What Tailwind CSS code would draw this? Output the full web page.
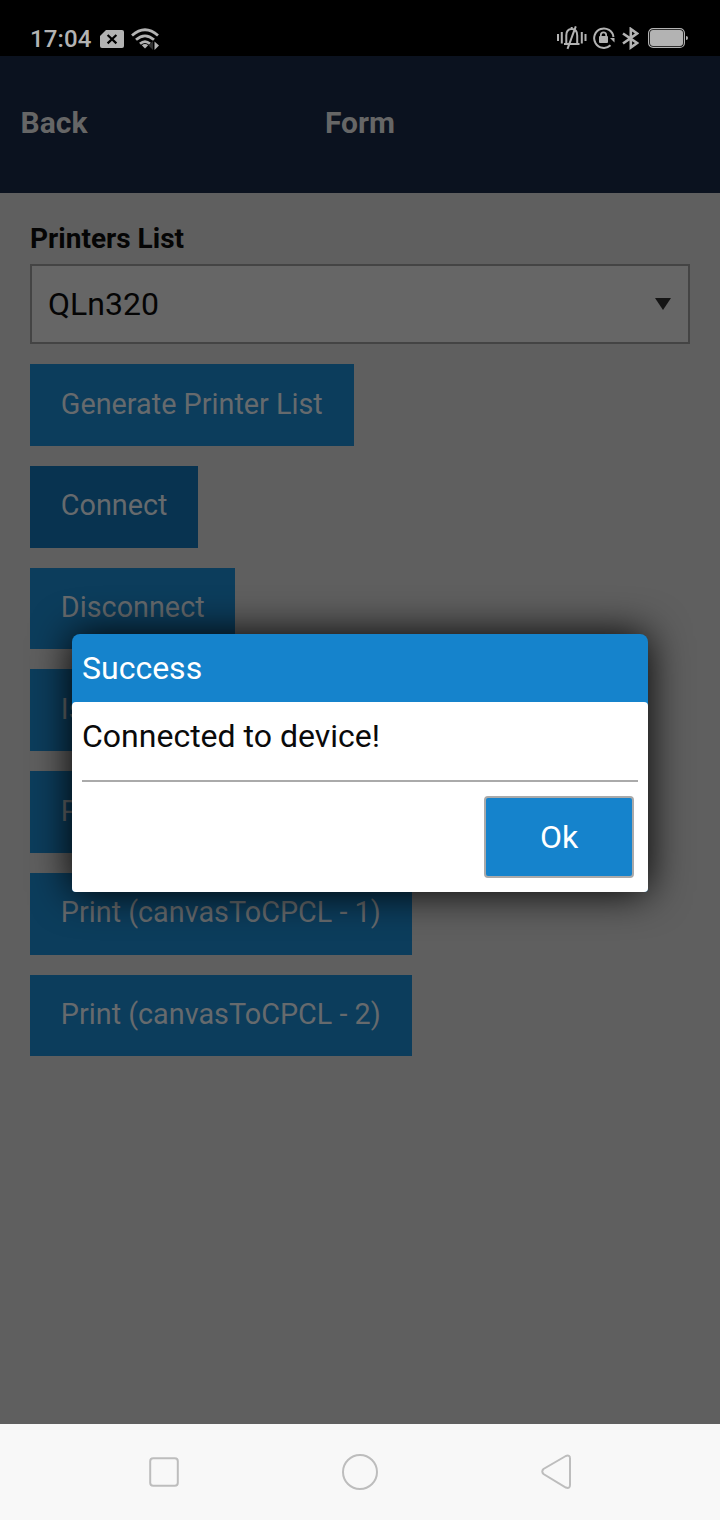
<!DOCTYPE html>
<html lang="en">
<head>
<meta charset="utf-8">
<title>Form</title>
<script src="https://cdn.jsdelivr.net/npm/@tailwindcss/browser@4"></script>
</head>
<body class="relative flex h-[1520px] w-[720px] flex-col overflow-hidden bg-[#5f5f5f] font-['Roboto',sans-serif]">
  <!-- Status bar -->
  <div class="flex h-14 shrink-0 items-center bg-black pt-5 pr-8 pl-[30px] text-[#b3b3b3]">
    <span class="w-[62px] pt-0.5 text-2xl leading-9 font-medium tracking-[0.1px]">17:04</span>
    <svg class="mt-0.5 ml-2 h-[18px] w-6 shrink-0" viewBox="0 0 24 18"><path fill="#b3b3b3" d="M6 0H22Q24 0 24 2V16Q24 18 22 18H2Q0 18 0 16V6Z"/><path d="M7.6 5L16.400 13.400M16.400 5L7.600 13.400" stroke="#000" stroke-width="2.200"/></svg>
    <svg class="mt-0.5 ml-[7px] h-[23px] w-[30px] shrink-0" viewBox="0 0 30 23" fill="none" stroke="#b3b3b3" stroke-width="2.800"><path d="M1 7.500Q14-4 27 7.500M5 11.800Q14 4 23 11.800M9 15.800Q14 11.500 19 15.800"/><path d="M10.800 17.300Q14 14.800 17.200 17.300L14 20.500Z" fill="#b3b3b3" stroke="none"/><path d="M22 13V22L17.500 17.500Z" fill="#333" stroke="none"/><path d="M23.500 13.500V22L28 17.500Z" fill="#b3b3b3" stroke="none"/></svg>
    <div class="ml-auto flex items-center">
      <svg class="h-6 w-[30px]" viewBox="0 0 30 24" fill="none" stroke="#b3b3b3" stroke-width="2"><path d="M1 8V15M4.800 6V17.500M24.800 6V17.500M28.500 8V15"/><path d="M7 18H22.500M9.300 18V9.500Q9.300 3 14.700 3Q20.200 3 20.200 9.500V18M14.700 3V1"/><path d="M18.800 .3L10.500 22.800"/></svg>
      <svg class="ml-1.5 size-[22px]" viewBox="0 0 22 22" fill="none" stroke="#b3b3b3" stroke-width="2"><path d="M17.500 18.300A9.700 9.700 0 1 1 20.500 10"/><path d="M17 11H21.500V15.500Z" fill="#b3b3b3" stroke="none"/><rect x="6" y="9" width="9" height="7" rx="1" fill="#b3b3b3" stroke="none"/><path d="M7.800 10V8A2.700 2.700 0 0 1 13.200 8V10" stroke-width="1.700"/></svg>
      <svg class="ml-[7px] h-[23px] w-[17px]" viewBox="0 0 17 23" fill="none" stroke="#b3b3b3" stroke-width="2.600"><path d="M1 6.500L15 16L8.800 20.500V2L15 6.500L1 16.500"/></svg>
      <svg class="ml-[9px] h-5 w-10" viewBox="0 0 40 20"><rect x=".6" y=".6" width="35.800" height="18.800" rx="4.500" fill="none" stroke="#b3b3b3" stroke-width="1.200"/><rect x="2" y="2" width="33" height="16" rx="3" fill="#b3b3b3"/><path d="M38 8Q40 8 40 10Q40 12 38 12Z" fill="#b3b3b3"/></svg>
    </div>
  </div>

  <!-- Title bar -->
  <header class="grid h-[137px] shrink-0 grid-cols-3 items-center bg-[#0b121f] px-[20px] text-[30px] leading-9 font-bold text-[#666]">
    <span class="-mt-1 pl-[0.6px]">Back</span>
    <span class="-mt-1 text-center">Form</span>
  </header>

  <!-- Form -->
  <main class="flex flex-1 flex-col items-start px-[30px] pt-7">
    <label class="text-[28px] leading-9 font-bold text-[#050505]">Printers List</label>
    <div class="mt-[7px] flex h-20 w-full items-center justify-between border-2 border-[#444] bg-[#666] pr-[17px] pl-4">
      <span class="text-[32px] leading-10 text-[#050505]">QLn320</span>
      <svg class="h-3 w-4" viewBox="0 0 16 12"><path d="M0 0H16L8 12Z" fill="#151515"/></svg>
    </div>
    <div class="mt-5 flex flex-col items-start gap-5 text-[28.800px] leading-9 whitespace-nowrap text-[#666a6d]">
      <div class="flex h-[81.75px] w-[324px] items-center bg-[#0c3d5c] pb-[2.700px] pl-[30.8px]">Generate Printer List</div>
      <div class="flex h-[81.75px] w-[168px] items-center bg-[#083350] pb-[2.700px] pl-[30.8px]">Connect</div>
      <div class="flex h-[81.75px] w-[205px] items-center bg-[#0c3d5c] pb-[2.700px] pl-[30.8px]">Disconnect</div>
      <div class="flex h-[81.75px] w-[240px] items-center bg-[#0c3d5c] pb-[2.700px] pl-[30.8px]">Is Connected</div>
      <div class="flex h-[81.75px] w-[128px] items-center bg-[#0c3d5c] pb-[2.700px] pl-[30.8px]">Print</div>
      <div class="flex h-[81.75px] w-[382px] items-center bg-[#0c3d5c] pb-[2.700px] pl-[30.8px]">Print (canvasToCPCL - 1)</div>
      <div class="flex h-[81.75px] w-[382px] items-center bg-[#0c3d5c] pb-[2.700px] pl-[30.8px]">Print (canvasToCPCL - 2)</div>
    </div>
  </main>

  <!-- Navigation bar -->
  <nav class="flex h-24 shrink-0 items-center justify-between bg-[#f8f8f8] pr-[149px] pl-[149px]">
    <svg class="size-[30px]" viewBox="0 0 30 30"><rect x="1.200" y="1.200" width="27.600" height="27.600" rx="3" fill="none" stroke="#bdbdbd" stroke-width="2"/></svg>
    <svg class="size-9" viewBox="0 0 36 36"><circle cx="18" cy="18" r="17" fill="none" stroke="#bdbdbd" stroke-width="2"/></svg>
    <svg class="h-9 w-[30px]" viewBox="0 0 30 36"><path d="M24.800 2L2.500 15Q0 17.500 2.500 20L24.800 33.500Q29 35 29 31V4.500Q29 .5 24.800 2Z" fill="none" stroke="#bdbdbd" stroke-width="2"/></svg>
  </nav>

  <!-- Dialog -->
  <div class="absolute top-[634px] left-[72px] h-[258px] w-[576px] rounded-t-[8px] rounded-b-[4px] bg-[#1583cc] text-[32px] whitespace-nowrap shadow-[0_0_40px_#000]">
    <div class="flex h-[68px] items-center px-2.5 text-white">Success</div>
    <div class="flex h-[190px] flex-col rounded-[4px] bg-white px-2.5">
      <p class="flex h-20 items-start border-b-2 border-[#aaa] pt-2.5 text-[#0a0a0a]">Connected to device!</p>
      <div class="mt-3.5 mr-1 flex h-[82px] w-[150px] items-center justify-center self-end rounded-[4px] border-2 border-[#aaa] bg-[#1583cc] text-white">Ok</div>
    </div>
  </div>
</body>
</html>
